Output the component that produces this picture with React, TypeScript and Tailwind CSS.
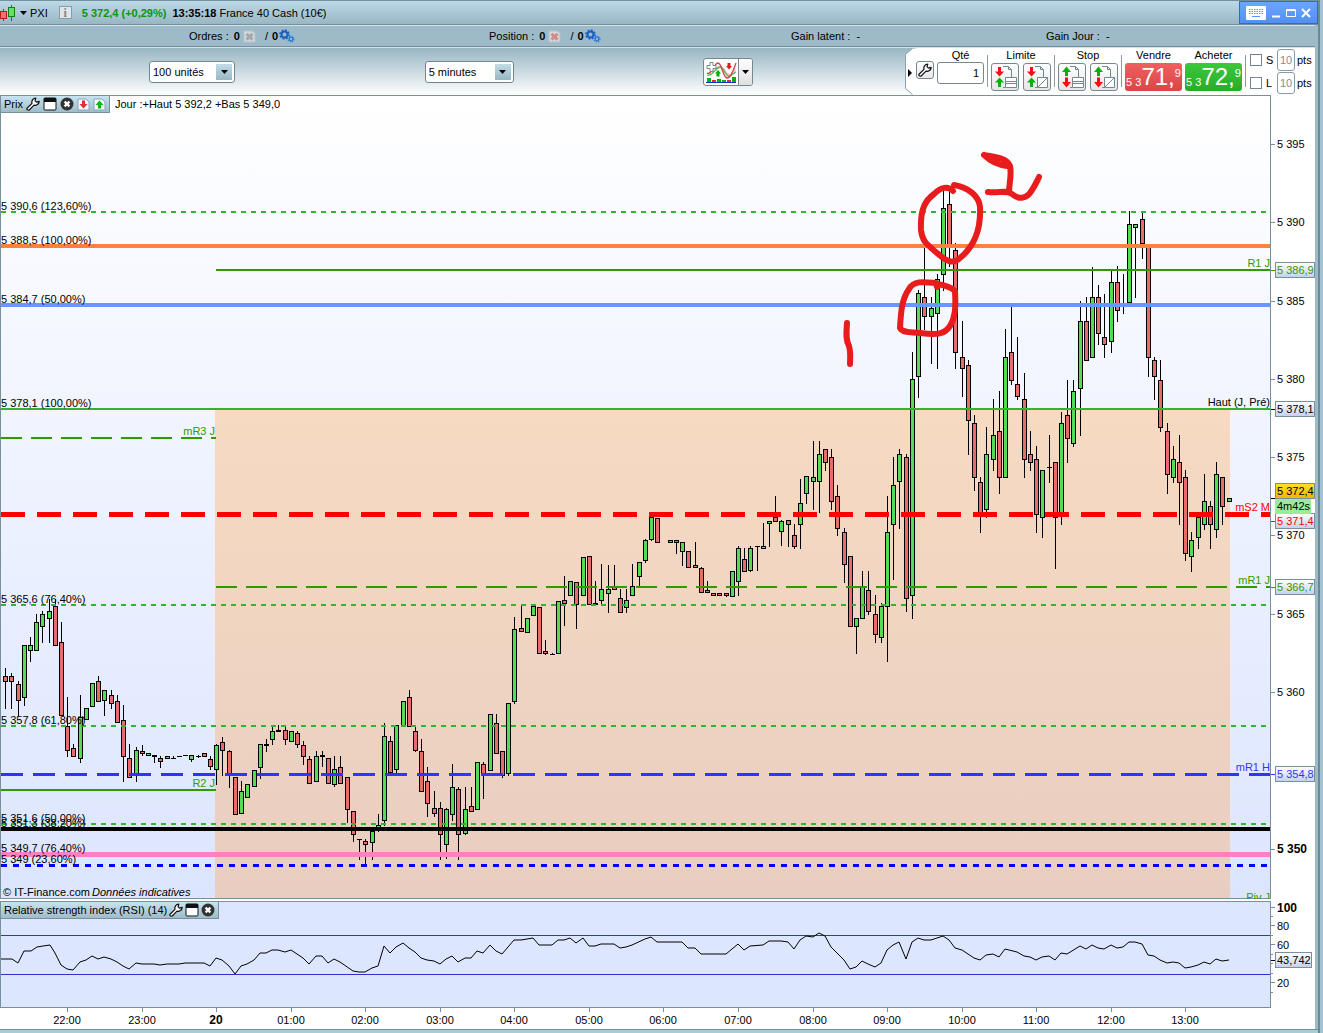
import React, { useState } from 'react';

// x, high, body top, body bottom, low, direction (1 = up, 0 = down)
type Candle = [number, number, number, number, number, number];

const candles: Candle[] = [
  [5, 668, 676, 682, 709, 0], [11, 673, 676, 682, 709, 0], [18, 681, 684, 701, 716, 0], [24, 645, 645, 698, 706, 1],
  [30, 637, 645, 651, 662, 1], [36, 614, 622, 651, 651, 1], [42, 611, 614, 627, 643, 1], [49, 599, 611, 619, 643, 1],
  [55, 599, 606, 646, 646, 0], [61, 622, 642, 716, 716, 0], [67, 697, 726, 751, 757, 0], [73, 744, 748, 757, 757, 0],
  [80, 695, 717, 759, 763, 1], [86, 708, 708, 720, 720, 1], [92, 683, 683, 707, 707, 1], [98, 676, 681, 702, 702, 0],
  [104, 690, 690, 701, 716, 1], [111, 690, 695, 704, 709, 0], [117, 695, 701, 723, 723, 0], [123, 705, 720, 757, 782, 0],
  [129, 744, 758, 778, 778, 0], [136, 747, 750, 775, 782, 1], [142, 745, 751, 754, 756, 0], [148, 753, 753, 756, 756, 1],
  [154, 755, 755, 757, 763, 0], [160, 756, 758, 762, 768, 0], [167, 756, 756, 759, 759, 1], [173, 756, 758, 759, 759, 0],
  [179, 756, 756, 757, 757, 0], [185, 755, 755, 756, 756, 0], [191, 755, 755, 760, 762, 1], [198, 755, 756, 757, 758, 0],
  [204, 753, 753, 757, 757, 0], [210, 756, 759, 767, 770, 0], [216, 744, 745, 770, 785, 1], [222, 737, 742, 751, 776, 0],
  [229, 750, 751, 775, 788, 0], [235, 777, 777, 815, 815, 0], [241, 781, 791, 814, 814, 1], [247, 784, 784, 798, 798, 1],
  [254, 770, 770, 787, 787, 1], [260, 744, 744, 768, 779, 1], [266, 739, 744, 746, 752, 0], [272, 727, 731, 740, 745, 1],
  [278, 725, 730, 732, 732, 0], [285, 727, 730, 740, 745, 0], [291, 731, 731, 742, 742, 1], [297, 731, 733, 745, 748, 0],
  [303, 741, 745, 757, 765, 0], [309, 756, 759, 784, 784, 0], [316, 751, 756, 782, 782, 1], [322, 751, 755, 757, 767, 0],
  [328, 758, 758, 784, 784, 0], [334, 756, 769, 785, 787, 1], [340, 756, 767, 784, 784, 0], [347, 777, 777, 810, 823, 0],
  [353, 811, 811, 835, 842, 0], [359, 839, 839, 840, 860, 0], [365, 839, 841, 845, 864, 0], [372, 831, 831, 843, 860, 1],
  [378, 814, 825, 828, 832, 1], [384, 723, 736, 821, 826, 1], [390, 736, 741, 773, 773, 0], [396, 725, 725, 770, 773, 1],
  [403, 701, 701, 726, 726, 1], [409, 690, 697, 727, 727, 0], [415, 727, 731, 751, 752, 0], [421, 739, 751, 792, 792, 0],
  [427, 767, 781, 804, 817, 0], [434, 791, 808, 814, 817, 0], [440, 802, 808, 835, 860, 0], [446, 808, 809, 845, 859, 1],
  [452, 764, 787, 815, 821, 1], [458, 787, 789, 835, 860, 0], [465, 787, 809, 834, 835, 1], [471, 787, 806, 812, 812, 0],
  [477, 762, 762, 810, 810, 1], [483, 762, 764, 775, 799, 0], [490, 714, 714, 771, 771, 1], [496, 714, 723, 754, 754, 0],
  [502, 751, 751, 776, 778, 0], [508, 703, 703, 774, 776, 1], [514, 617, 629, 702, 704, 1], [521, 606, 628, 632, 632, 0],
  [527, 618, 618, 633, 633, 1], [533, 606, 606, 616, 616, 1], [539, 607, 607, 654, 654, 0], [545, 640, 651, 654, 655, 0],
  [552, 653, 654, 655, 655, 0], [558, 601, 601, 654, 654, 1], [564, 576, 600, 604, 626, 0], [570, 581, 581, 596, 596, 1],
  [576, 582, 582, 605, 629, 0], [583, 557, 557, 596, 596, 1], [589, 556, 556, 605, 605, 0], [595, 581, 603, 605, 605, 0],
  [601, 564, 589, 601, 604, 1], [608, 565, 589, 594, 613, 1], [614, 565, 587, 590, 590, 0], [620, 589, 598, 613, 613, 0],
  [626, 589, 600, 608, 613, 1], [632, 564, 586, 596, 596, 1], [639, 562, 562, 577, 587, 1], [645, 539, 540, 561, 563, 1],
  [651, 514, 517, 540, 541, 1], [657, 518, 518, 543, 543, 0], [670, 540, 540, 543, 543, 0], [676, 540, 540, 543, 554, 0],
  [682, 542, 542, 552, 566, 1], [688, 551, 551, 568, 568, 0], [695, 542, 565, 568, 568, 0], [701, 567, 568, 593, 593, 0],
  [707, 581, 590, 593, 593, 0], [713, 593, 593, 596, 596, 0], [719, 593, 593, 596, 596, 0], [726, 593, 593, 596, 597, 0],
  [732, 571, 571, 597, 597, 1], [738, 546, 548, 582, 596, 1], [744, 548, 559, 572, 572, 0], [750, 546, 548, 571, 572, 1],
  [757, 546, 546, 547, 571, 0], [763, 523, 546, 549, 549, 1], [769, 521, 521, 524, 547, 1], [775, 496, 517, 522, 522, 0],
  [781, 520, 521, 532, 546, 1], [788, 520, 520, 525, 547, 0], [794, 524, 535, 547, 549, 0], [800, 479, 503, 525, 549, 1],
  [806, 476, 476, 494, 504, 1], [813, 441, 477, 482, 510, 1], [819, 441, 454, 482, 513, 1], [825, 449, 449, 463, 471, 0],
  [831, 449, 457, 502, 510, 0], [837, 485, 496, 529, 536, 0], [844, 528, 532, 565, 583, 0], [850, 556, 556, 627, 627, 0],
  [856, 618, 618, 627, 654, 1], [862, 571, 587, 619, 619, 1], [868, 571, 590, 612, 615, 0], [875, 595, 614, 635, 643, 0],
  [881, 603, 606, 638, 643, 1], [887, 496, 532, 607, 662, 1], [893, 457, 485, 525, 580, 1], [899, 449, 454, 482, 529, 1],
  [906, 454, 457, 599, 612, 0], [912, 352, 379, 596, 619, 1], [918, 290, 293, 377, 398, 1], [924, 248, 297, 317, 330, 0],
  [931, 297, 308, 317, 364, 1], [937, 274, 279, 314, 369, 1], [943, 190, 208, 275, 291, 1], [949, 190, 204, 246, 267, 0],
  [955, 243, 250, 353, 369, 0], [962, 321, 357, 369, 397, 0], [968, 360, 365, 421, 455, 0], [974, 415, 423, 478, 491, 0],
  [980, 477, 482, 514, 533, 0], [986, 427, 454, 510, 518, 1], [993, 399, 435, 460, 471, 1], [999, 391, 431, 478, 494, 0],
  [1005, 329, 357, 478, 478, 1], [1011, 307, 352, 381, 385, 0], [1017, 337, 384, 397, 400, 0], [1024, 373, 399, 460, 478, 0],
  [1030, 431, 454, 463, 471, 0], [1036, 446, 459, 515, 533, 0], [1042, 470, 470, 518, 538, 1], [1049, 435, 467, 468, 483, 0],
  [1055, 462, 462, 518, 569, 0], [1061, 412, 423, 514, 525, 1], [1067, 380, 415, 439, 463, 0], [1073, 380, 391, 444, 447, 1],
  [1080, 301, 321, 389, 436, 1], [1086, 297, 321, 361, 361, 0], [1092, 267, 297, 358, 358, 1], [1098, 285, 297, 334, 345, 0],
  [1104, 294, 337, 345, 358, 0], [1111, 271, 282, 342, 353, 1], [1117, 266, 282, 311, 322, 0], [1123, 274, 304, 306, 314, 0],
  [1129, 211, 224, 303, 303, 1], [1135, 224, 224, 228, 298, 1], [1142, 213, 219, 244, 259, 0], [1148, 247, 247, 358, 377, 0],
  [1154, 357, 360, 377, 400, 0], [1160, 360, 380, 428, 432, 0], [1167, 423, 431, 475, 494, 0], [1173, 446, 459, 478, 483, 1],
  [1179, 435, 462, 483, 525, 0], [1185, 470, 477, 554, 561, 0], [1191, 532, 540, 557, 572, 1], [1198, 514, 517, 538, 549, 1],
  [1204, 474, 501, 525, 530, 1], [1210, 501, 506, 525, 549, 0], [1216, 462, 474, 530, 538, 1], [1222, 477, 477, 507, 525, 0],
  [1229, 498, 498, 502, 502, 1],
];

const levels = [
  { y: 212, x1: 1, color: '#33b333', width: 2, dash: '5 5' },
  { y: 246, x1: 1, color: '#ff8040', width: 4 },
  { y: 270, x1: 216, color: '#339900', width: 2 },
  { y: 305, x1: 1, color: '#6699ff', width: 4 },
  { y: 409, x1: 1, color: '#33b333', width: 2 },
  { y: 438, x1: 1, x2: 216, color: '#339900', width: 2, dash: '21 9' },
  { y: 514.5, x1: 1, color: '#ff0000', width: 5, dash: '24 12' },
  { y: 587, x1: 216, color: '#339900', width: 2, dash: '21 9' },
  { y: 605, x1: 1, color: '#33b333', width: 2, dash: '5 5' },
  { y: 726, x1: 1, color: '#33b333', width: 2, dash: '5 5' },
  { y: 774.5, x1: 1, color: '#3333ff', width: 3, dash: '22 10' },
  { y: 790, x1: 1, x2: 216, color: '#339900', width: 2 },
  { y: 824, x1: 1, color: '#33b333', width: 2, dash: '5 5' },
  { y: 829, x1: 1, color: '#000000', width: 4 },
  { y: 854.5, x1: 1, color: '#ff80c0', width: 5 },
  { y: 865.5, x1: 1, color: '#0000ff', width: 3, dash: '6 6' },
];

const levelLabels: [number, string][] = [
  [210, '5 390,6 (123,60%)'],
  [244, '5 388,5 (100,00%)'],
  [303, '5 384,7 (50,00%)'],
  [407, '5 378,1 (100,00%)'],
  [603, '5 365,6 (76,40%)'],
  [724, '5 357,8 (61,80%)'],
  [822, '5 351,6 (50,00%)'],
  [827, '5 351,3 (38,20%)'],
  [852, '5 349,7 (76,40%)'],
  [863, '5 349 (23,60%)'],
];

const pivotLabels: [number, number, string, string][] = [
  [1270, 267, 'R1 J', '#339900'],
  [1270, 406, 'Haut (J, Pré)', '#000000'],
  [215, 435, 'mR3 J', '#339900'],
  [1270, 511, 'mS2 M', '#ff0000'],
  [1270, 584, 'mR1 J', '#339900'],
  [1270, 771, 'mR1 H', '#3333ff'],
  [215, 787, 'R2 J', '#339900'],
  [1270, 901, 'Piv J', '#339900'],
];

const priceTicks: [number, string][] = [
  [144, '5 395'], [222, '5 390'], [301, '5 385'], [379, '5 380'], [457, '5 375'],
  [535, '5 370'], [614, '5 365'], [692, '5 360'], [849, '5 350'],
];

const priceTags: [number, string, string][] = [
  [270, '5 386,9', '#339900'],
  [409, '5 378,1', '#000000'],
  [521, '5 371,4', '#ff0000'],
  [587, '5 366,7', '#339900'],
  [774, '5 354,8', '#3333ff'],
];

const rsi =
  '1,959 12,959 18,963 24,951 31,951 37,947 43,946 50,945 55,953 61,965 67,969 73,970 80,962 86,960 92,956 98,959 104,957 111,959 117,962 123,966 129,969 136,963 142,964 154,964 160,965 167,964 179,964 185,963 204,963 210,966 216,958 222,960 229,966 235,974 241,966 247,964 254,960 260,953 266,953 272,950 278,950 285,952 291,950 303,958 309,964 316,956 322,956 328,963 334,959 340,962 353,971 359,972 365,972 372,968 378,966 384,946 390,953 396,947 403,943 409,948 415,952 421,958 427,960 434,961 440,964 ' +
  '446,959 452,956 458,962 465,958 471,958 477,951 483,953 490,945 496,951 502,954 508,947 514,940 521,940 533,938 539,945 552,945 558,940 564,940 570,938 576,943 583,938 589,946 595,946 601,944 614,944 620,948 626,947 632,945 645,939 651,937 657,942 682,942 688,948 695,948 701,954 726,954 738,944 744,950 750,946 763,945 769,941 781,941 788,942 794,949 800,940 806,936 813,937 819,933 825,936 831,947 844,960 850,969 856,967 862,961 868,964 875,967 ' +
  '881,963 887,950 893,945 899,942 906,959 912,942 918,938 924,940 931,940 937,938 943,936 949,940 955,948 962,950 974,958 980,960 986,955 993,954 999,957 1005,949 1017,952 1024,956 1030,957 1036,960 1042,957 1049,956 1055,960 1061,953 1067,954 1080,946 1086,949 1092,945 1098,948 1104,949 1111,945 1117,948 1123,947 1129,942 1135,942 1142,944 1148,955 1154,956 1160,960 1167,963 1173,962 1179,963 1185,968 1191,967 1198,965 1204,962 1210,964 1216,959 1222,961 1229,960';

const hours: [number, string][] = [
  [67, '22:00'], [142, '23:00'], [216, '20'], [291, '01:00'], [365, '02:00'], [440, '03:00'],
  [514, '04:00'], [589, '05:00'], [663, '06:00'], [738, '07:00'], [813, '08:00'], [887, '09:00'],
  [962, '10:00'], [1036, '11:00'], [1111, '12:00'], [1185, '13:00'],
];

const rsiTicks: [number, string][] = [[908, '100'], [926, '80'], [945, '60'], [983, '20']];
const rsiMinorTicks = [917, 936, 955, 964, 974, 993];

function WrenchIcon() {
  return (
    <svg width="14" height="14" viewBox="0 0 14 14" fill="#fff" stroke="#111" strokeWidth="1.2" strokeLinejoin="round">
      <path d="M1 11.3 6 6.4C5.3 4 6.8 1.2 9.8 1L9 3.6 10.4 5.2 13.2 4.4C13 7.2 10.6 8.7 8 8.2L3.2 13C1.8 13.6.5 12.6 1 11.3Z" />
    </svg>
  );
}

function WindowIcon() {
  return (
    <svg width="14" height="14" viewBox="0 0 14 14">
      <rect x="1" y="1" width="12" height="12" rx="1" fill="#fff" stroke="#111" />
      <rect x="1" y="1" width="12" height="4" fill="#111" />
    </svg>
  );
}

function CloseIcon() {
  return (
    <svg width="14" height="14" viewBox="0 0 14 14">
      <circle cx="7" cy="7" r="6.5" fill="#333" />
      <path d="M4.6 4.6 9.4 9.4M9.4 4.6 4.6 9.4" stroke="#fff" strokeWidth="2.2" />
    </svg>
  );
}

function PageArrowIcon({ up }: { up?: boolean }) {
  return (
    <svg width="13" height="13" viewBox="0 0 13 13">
      <path d="M1 1H9L12 4V12H1Z" fill="#f4f7fc" stroke="#8aa4c4" />
      {up ? (
        <path d="M6.5 2.5 10.5 7H8V10.5H5V7H2.5Z" fill="#0db50d" />
      ) : (
        <path d="M6.5 10.5 10.5 6H8V2.5H5V6H2.5Z" fill="#e03030" />
      )}
    </svg>
  );
}

function GearsIcon() {
  return (
    <svg width="16" height="14" viewBox="0 0 16 14" fill="none">
      <circle cx="5.5" cy="5.5" r="3" stroke="#1c5fc4" strokeWidth="2" />
      <circle cx="5.5" cy="5.5" r="4.5" stroke="#1c5fc4" strokeWidth="1.6" strokeDasharray="1.8 1.73" />
      <circle cx="12" cy="10" r="1.8" stroke="#2a78dc" strokeWidth="1.3" />
      <circle cx="12" cy="10" r="3" stroke="#2a78dc" strokeWidth="1.2" strokeDasharray="1.2 1.16" />
    </svg>
  );
}

function CancelIcon({ color }: { color: string }) {
  return (
    <svg width="13" height="13" viewBox="0 0 13 13">
      <path d="M1 1H9L12 3V12H1Z" fill="#d3d9dc" stroke="#b9c2c7" />
      <path d="M3.5 3.8 9.5 9.6M9.5 3.8 3.5 9.6" stroke={color} strokeWidth="3" />
    </svg>
  );
}

function OrderIcon({ stop, half }: { stop?: boolean; half?: boolean }) {
  const top = stop ? '#0fae0f' : '#f01010';
  const bottom = stop ? '#f01010' : '#0fae0f';
  return (
    <svg width="26" height="26" viewBox="0 0 26 26">
      <path d="M11 2.5H16.5L19.5 5.5V14M16.5 2.5V5.5H19.5M11 23.5H13" fill="none" stroke="#74888f" />
      <path d={stop ? 'M7.5 2.5 12 8H9V12H6V8H3Z' : 'M7.5 12.5 12 7.5H9V3H6V7.5H3Z'} fill={top} />
      <path d={stop ? 'M7.5 23.5 12 18H9V13.5H6V18H3Z' : 'M7.5 13.5 12 18.5H9V23H6V18.5H3Z'} fill={bottom} />
      {half ? (
        <path d="M13.5 13.5H23.5V23.5H13.5ZM23.5 13.5 13.5 23.5" fill="#fff" stroke="#74888f" />
      ) : (
        <path d="M13.5 13.5H24.5V23.5H13.5ZM13.5 17.5H24.5M13.5 19.5H24.5" fill="#fff" stroke="#74888f" />
      )}
    </svg>
  );
}

function Caret() {
  return (
    <svg width="7" height="4" viewBox="0 0 7 4">
      <path d="M0 0H7L3.5 4Z" fill="#000" />
    </svg>
  );
}

function TitleBar() {
  return (
    <header className="flex h-[25px] items-stretch border-y border-[#758f9b] bg-gradient-to-b from-[#bbd9e8] to-[#98b6c3]">
      <div className="flex flex-1 items-center">
        <button type="button" aria-label="Instrument" className="flex items-center gap-[3px]">
          <svg width="17" height="18" viewBox="0 0 17 18">
            <path d="M3.5 5V17" stroke="#c02020" />
            <rect x=".5" y="7.5" width="6" height="7" fill="#ee7070" stroke="#b02020" />
            <path d="M11.5 1V17" stroke="#108010" />
            <rect x="8.5" y="3.5" width="6" height="9" fill="#66e066" stroke="#108010" />
          </svg>
          <Caret />
          <span>PXI</span>
        </button>
        <button type="button" aria-label="Informations" className="ml-[11px] flex h-[13px] w-[13px] items-center justify-center border border-[#8d9aa2] bg-[#dfe5e8] font-['Liberation_Serif',serif] text-xs font-bold leading-none text-[#7b868c]">
          i
        </button>
        <span className="ml-[10px] font-bold text-[#0a960a]">5 372,4 (+0,29%)</span>
        <span className="ml-[6px] font-bold">13:35:18</span>
        <span className="ml-[3px]">France 40 Cash (10€)</span>
      </div>
      <div className="flex items-center gap-[5px] border border-[#3568c8] bg-gradient-to-b from-[#6ba6ff] to-[#538ff0] px-[6px]">
        <button type="button" aria-label="Clavier">
          <svg width="20" height="14" viewBox="0 0 20 14">
            <rect width="20" height="14" rx="1" fill="#fff" />
            <path d="M3 3.5H17M3 5.5H17M3 7.5H17" stroke="#5a96f4" strokeWidth="1.2" strokeDasharray="1.5 1" />
            <path d="M6 10.5H14" stroke="#5a96f4" />
          </svg>
        </button>
        <button type="button" aria-label="Réduire">
          <svg width="10" height="10" viewBox="0 0 10 10"><path d="M1 8.5H9" stroke="#fff" strokeWidth="2" /></svg>
        </button>
        <button type="button" aria-label="Agrandir">
          <svg width="10" height="10" viewBox="0 0 10 10"><path d="M.5 1.5H9.5V8.5H.5ZM.5 2.5H9.5" stroke="#fff" fill="none" /></svg>
        </button>
        <button type="button" aria-label="Fermer">
          <svg width="10" height="10" viewBox="0 0 10 10"><path d="M1 1 9 9M9 1 1 9" stroke="#fff" strokeWidth="2" /></svg>
        </button>
      </div>
    </header>
  );
}

function StatusCount({ label, color }: { label: string; color: string }) {
  return (
    <div className="flex items-center">
      <span>{label} :</span>
      <b className="ml-[5px]">0</b>
      <button type="button" aria-label={`Annuler ${label}`} className="ml-[3px]"><CancelIcon color={color} /></button>
      <span className="ml-[9px]">/</span>
      <b className="ml-1">0</b>
      <button type="button" aria-label={`Options ${label}`} className="ml-px"><GearsIcon /></button>
    </div>
  );
}

function StatusRow() {
  return (
    <div className="grid h-[22px] grid-cols-[300fr_302fr_255fr_269fr] items-center border-b border-t border-b-[#758f9b] border-t-[#cfe2ea] bg-[#9cbac7] pl-[189px]">
      <StatusCount label="Ordres" color="#a2a8ab" />
      <StatusCount label="Position" color="#d28c8c" />
      <div>Gain latent :&nbsp; -</div>
      <div>Gain Jour :&nbsp; -</div>
    </div>
  );
}

function Dropdown({ label, options, className }: { label: string; options: string[]; className: string }) {
  return (
    <div className={`relative ${className}`}>
      <select aria-label={label} className="h-[22px] w-full appearance-none rounded-[3px] border border-[#6f8791] bg-white pl-[3px] outline-none">
        {options.map((o) => (
          <option key={o}>{o}</option>
        ))}
      </select>
      <span className="pointer-events-none absolute right-[3px] top-[3px] flex h-4 w-4 items-center justify-center bg-gradient-to-b from-[#c2dce8] to-[#98b6c3]">
        <Caret />
      </span>
    </div>
  );
}

function OrderGroup({ label, stop }: { label: string; stop?: boolean }) {
  return (
    <div className="w-[60px]">
      <div className="h-[15px] text-center leading-[15px]">{label}</div>
      <div className="flex justify-between">
        <button type="button" aria-label={`${label} quantité entière`} className="flex h-7 w-7 items-center justify-center rounded-[3px] border border-[#74888f] bg-gradient-to-b from-white to-[#e6e6e6]">
          <OrderIcon stop={stop} />
        </button>
        <button type="button" aria-label={`${label} demi quantité`} className="flex h-7 w-7 items-center justify-center rounded-[3px] border border-[#74888f] bg-gradient-to-b from-white to-[#e6e6e6]">
          <OrderIcon stop={stop} half />
        </button>
      </div>
    </div>
  );
}

function DealButton({ label, big, className }: { label: string; big: string; className: string }) {
  return (
    <div className="w-[57px]">
      <div className="h-[15px] text-center leading-[15px]">{label}</div>
      <button type="button" aria-label={label} className={`flex h-7 w-full items-end justify-center rounded-[3px] text-white ${className}`}>
        <span className="pb-[2px] leading-[14px]">5 3</span>
        <span className="text-2xl leading-7">{big},</span>
        <span className="self-start pt-[3px] leading-[14px]">9</span>
      </button>
    </div>
  );
}

function PointsRow({ label }: { label: string }) {
  const [value, setValue] = useState('10');
  return (
    <div className="flex h-[23px] items-center">
      <label className="flex w-[27px] items-center gap-1">
        <input type="checkbox" className="h-3 w-3 appearance-none border border-[#74888f] bg-white checked:bg-[#74888f]" />
        {label}
      </label>
      <input
        aria-label={`${label} points`}
        value={value}
        onChange={(e) => setValue(e.target.value)}
        className="h-[22px] w-[18px] rounded-[3px] border border-[#8b9ba3] bg-white text-center text-[#8c8c8c] outline-none"
      />
      <span className="ml-[2px]">pts</span>
    </div>
  );
}

function Separator() {
  return <div className="mt-[7px] h-8 w-px bg-[#8b9ba3]" />;
}

function OrderPanel() {
  const [quantity, setQuantity] = useState('1');
  return (
    <div className="flex w-[411px] items-start">
      <button type="button" aria-label="Replier" className="h-[47px] w-[12px]">
        <svg width="12" height="47" viewBox="0 0 12 47">
          <path d="M8.5.5H12V46.5H8.5L1.5 40.5V6.5Z" fill="#fff" />
          <path d="M8.5.5 1.5 6.5V40.5L8.5 46.5" fill="none" stroke="#8ba1ab" />
          <path d="M4 21V29L8 25Z" fill="#000" />
        </svg>
      </button>
      <div className="flex h-[47px] flex-1 gap-[3px] bg-white">
        <button type="button" aria-label="Réglages" className="mt-[13px] flex h-[18px] w-[18px] items-center justify-center rounded-[3px] border border-[#74888f] bg-gradient-to-b from-white to-[#e6e6e6]">
          <WrenchIcon />
        </button>
        <div className="flex w-[47px] flex-col">
          <label htmlFor="quantity" className="h-[14px] text-center leading-[15px]">Qté</label>
          <input
            id="quantity"
            value={quantity}
            onChange={(e) => setQuantity(e.target.value)}
            className="h-[22px] rounded-[3px] border border-[#74888f] bg-white pr-1 text-right outline-none"
          />
        </div>
        <Separator />
        <OrderGroup label="Limite" />
        <Separator />
        <OrderGroup label="Stop" stop />
        <Separator />
        <DealButton label="Vendre" big="71" className="bg-gradient-to-b from-[#f06060] to-[#d94545]" />
        <DealButton label="Acheter" big="72" className="bg-gradient-to-b from-[#3cc83c] to-[#28ac28]" />
        <Separator />
        <div className="pl-px">
          <PointsRow label="S" />
          <PointsRow label="L" />
        </div>
      </div>
    </div>
  );
}

function Toolbar() {
  return (
    <div className="flex h-12 items-start border-t border-t-[#cfe2ea] bg-gradient-to-b from-[#98b6c3] to-white">
      <div className="grid h-[47px] flex-1 grid-cols-[276fr_279fr_201fr] items-center pl-[149px]">
        <Dropdown label="Nombre d'unités" options={['100 unités', '200 unités', '500 unités']} className="w-[86px]" />
        <Dropdown label="Unité de temps" options={['5 minutes', '15 minutes', '1 heure']} className="w-[89px]" />
        <div className="flex h-7 w-[50px] items-stretch rounded-[3px] border border-[#74888f] bg-white">
          <button type="button" aria-label="Ajouter un indicateur" className="flex w-[34px] items-center justify-center">
            <svg width="32" height="24" viewBox="0 0 32 24" fill="none">
              <path d="M11 8C13 5 15 6 17 10L22 18C26 16 28 12 30 4L31 12C28 17 25 15 22 12S17 5 11 11Z" fill="#ee9c9c" opacity=".5" />
              <path d="M2 15C8 17 10 7 15 7S20 17 25 16L31 12" stroke="#58b858" strokeWidth="1.3" />
              <path d="M2 13C6 16 9 3 13 3S18 18 22 18S28 11 31 3" stroke="#d04040" strokeWidth="1.3" />
              <path d="M5 2.5H8V5.5H11V8.5H8V11.5H5V8.5H2V5.5H5Z" fill="#fff" stroke="#74888f" />
              <path d="M13 10 16 13.5H14.5V16.5H11.5V13.5H10Z" fill="#00b000" />
              <path d="M24 9.5 27 6H25.5V3H22.5V6H21Z" fill="#f01818" />
              <path d="M2 18H6V22H2ZM12 19H16V22H12ZM17 20H21V22H17ZM27 17H31V22H27Z" fill="#00b400" />
              <path d="M7 20H11V22H7ZM22 20H26V22H22Z" fill="#d83030" />
              <path d="M1 22.5H31" stroke="#1030d0" />
            </svg>
          </button>
          <button type="button" aria-label="Liste des indicateurs" className="flex flex-1 items-center justify-center rounded-r-[3px] border-l border-[#74888f] bg-gradient-to-b from-white to-[#e0e0e0]">
            <Caret />
          </button>
        </div>
      </div>
      <OrderPanel />
    </div>
  );
}

function PriceChart() {
  return (
    <div className="relative">
      <svg viewBox="0 95 1315 804" className="block h-auto w-full font-['Liberation_Sans',Arial,sans-serif] text-[11px]">
        <defs>
          <linearGradient id="plot" x1="0" y1="0" x2="0" y2="1">
            <stop offset="0" stopColor="#ffffff" />
            <stop offset="1" stopColor="#dce5ff" />
          </linearGradient>
          <linearGradient id="session" x1="0" y1="0" x2="0" y2="1">
            <stop offset="0" stopColor="#f6dac2" />
            <stop offset="1" stopColor="#e8cec0" />
          </linearGradient>
          <linearGradient id="tag" x1="0" y1="0" x2="0" y2="1">
            <stop offset="0" stopColor="#ffffff" />
            <stop offset="1" stopColor="#c4d0ee" />
          </linearGradient>
          <linearGradient id="last" x1="0" y1="0" x2="0" y2="1">
            <stop offset="0" stopColor="#ffe030" />
            <stop offset="1" stopColor="#f0b400" />
          </linearGradient>
        </defs>
        <rect x="0" y="95" width="1315" height="804" fill="#fff" />
        <rect x="0.5" y="95.5" width="1270" height="803" fill="url(#plot)" stroke="#78909c" />
        <rect x="215" y="409" width="1015" height="489" fill="url(#session)" />

        <g shapeRendering="crispEdges">
          {candles.map(([x, high, top, bottom, low, up]) => (
            <g key={x}>
              <rect x={x} y={high} width="1" height={Math.max(low - high, 1)} fill="#000" />
              <rect x={x - 2} y={top} width="5" height={bottom - top} fill="#000" />
              {bottom - top > 2 && (
                <rect x={x - 1} y={top + 1} width="3" height={bottom - top - 2} fill={up ? '#55dc55' : '#e86c6c'} />
              )}
            </g>
          ))}
          {levels.map((l) => (
            <line key={l.y} x1={l.x1} x2={l.x2 ?? 1270} y1={l.y} y2={l.y} stroke={l.color} strokeWidth={l.width} strokeDasharray={l.dash} />
          ))}
        </g>

        {levelLabels.map(([y, text]) => (
          <text key={text} x="1" y={y}>{text}</text>
        ))}
        {pivotLabels.map(([x, y, text, color]) => (
          <text key={text} x={x} y={y} fill={color} textAnchor="end">{text}</text>
        ))}
        <text x="3" y="896">© IT-Finance.com</text>
        <text x="92" y="896" fontStyle="italic">Données indicatives</text>

        {priceTicks.map(([y, text]) => (
          <g key={text}>
            <path d={`M1270 ${y + 0.5}H1275`} stroke="#78909c" />
            <text x="1277" y={y + 4} className={text === '5 350' ? 'text-xs font-bold' : ''}>{text}</text>
          </g>
        ))}
        {priceTags.map(([y, text, color]) => (
          <g key={text}>
            <path d={`M1271 ${y + 0.5}H1275`} stroke={color} />
            <rect x="1275.5" y={y - 7.5} width="39" height="15" fill="url(#tag)" stroke="#78909c" />
            <text x="1277" y={y + 4} fill={color}>{text}</text>
          </g>
        ))}
        <path d="M1271 498.5H1275" stroke="#000" />
        <rect x="1275.5" y="483.5" width="39" height="15" fill="url(#last)" stroke="#78909c" />
        <text x="1277" y="495">5 372,4</text>
        <rect x="1275" y="499" width="36" height="15" fill="#98ee98" />
        <text x="1277" y="510">4m42s</text>

        {/* hand drawn marks */}
        <g fill="none" stroke="#e81c1c" strokeWidth="6" strokeLinecap="round" strokeLinejoin="round">
          <path d="M954 185C968 187 979 196 980 207C981 228 976 245 960 258C953 265 946 261 937 253C925 243 922 240 921 230C920 208 926 200 934 194C941 187 948 186 953 191" />
          <path d="M937 287L936 283C925 282 914 280 909 289C902 299 901 310 900 328C903 333 910 332 920 333C936 335 944 335 950 326C955 318 956 309 955 291C951 287 944 285 937 284" />
          <path d="M984 155C989 160 998 165 1007 166M984 155C993 157 1006 157 1010 166C1012 175 1009 184 1009 192M988 192C1000 193 1007 190 1012 194C1019 200 1027 199 1032 190C1036 184 1037 181 1039 177" />
          <path d="M847 323C846 335 846 341 849 346C851 353 850 358 850 364" />
        </g>
      </svg>
      <div className="absolute left-0 top-0 flex h-[18px] items-center">
        <div className="flex h-full items-center gap-[3px] border border-[#78909c] bg-gradient-to-b from-[#c8e4f0] to-[#9fbcc9] px-[3px]">
          <span>Prix</span>
          <button type="button" aria-label="Réglages du prix"><WrenchIcon /></button>
          <button type="button" aria-label="Fenêtre du prix"><WindowIcon /></button>
          <button type="button" aria-label="Fermer le prix"><CloseIcon /></button>
          <button type="button" aria-label="Descendre"><PageArrowIcon /></button>
          <button type="button" aria-label="Monter"><PageArrowIcon up /></button>
        </div>
        <span className="ml-[5px]">Jour :+Haut 5 392,2 +Bas 5 349,0</span>
      </div>
    </div>
  );
}

function RsiChart() {
  return (
    <div className="relative pt-[2px]">
      <svg viewBox="0 901 1315 128" className="block h-auto w-full font-['Liberation_Sans',Arial,sans-serif] text-[11px]">
        <rect x="0.5" y="901.5" width="1270" height="106" fill="#dde6ff" stroke="#78909c" />
        <path d="M1 935.5H1270M1 974.5H1270" stroke="#3333cc" />
        <polyline points={rsi} fill="none" stroke="#000" />
        {rsiTicks.map(([y, text]) => (
          <g key={text}>
            <path d={`M1270 ${y - 0.5}H1275`} stroke="#78909c" />
            <text x="1277" y={y + 4} className={text === '100' ? 'text-xs font-bold' : ''}>{text}</text>
          </g>
        ))}
        {rsiMinorTicks.map((y) => (
          <path key={y} d={`M1270 ${y - 0.5}H1273`} stroke="#78909c" />
        ))}
        <path d="M1271 960.5H1275" stroke="#000" />
        <rect x="1275.5" y="952.5" width="36" height="15" fill="url(#tag)" stroke="#78909c" />
        <text x="1277" y="964">43,742</text>
        {hours.map(([x, text]) => (
          <g key={text}>
            <path d={`M${x + 0.5} 1008V1012`} stroke="#78909c" />
            <text x={x} y="1024" textAnchor="middle" className={text === '20' ? 'text-xs font-bold' : ''}>{text}</text>
          </g>
        ))}
      </svg>
      <div className="absolute left-0 top-[2px] flex h-[18px] items-center gap-[2px] border border-[#78909c] bg-gradient-to-b from-[#c8e4f0] to-[#9fbcc9] px-[3px]">
        <span>Relative strength index (RSI) (14)</span>
        <button type="button" aria-label="Réglages du RSI"><WrenchIcon /></button>
        <button type="button" aria-label="Fenêtre du RSI"><WindowIcon /></button>
        <button type="button" aria-label="Fermer le RSI"><CloseIcon /></button>
      </div>
    </div>
  );
}

export default function App() {
  return (
    <div className="flex w-full bg-white font-['Liberation_Sans',Arial,sans-serif] text-[11px] leading-[14px] text-black">
      <div className="min-w-0 flex-1">
        <TitleBar />
        <div className="flex">
          <main className="min-w-0 flex-1">
            <StatusRow />
            <Toolbar />
            <PriceChart />
            <RsiChart />
          </main>
          <div className="w-[3px] bg-[#9cbac7]" />
        </div>
        <div className="h-[4px] border-t border-[#758f9b] bg-[#a9ccd9]" />
      </div>
      <div className="w-[5px] border-l-2 border-[#6f8894] bg-[#a4c3d2]" />
    </div>
  );
}
